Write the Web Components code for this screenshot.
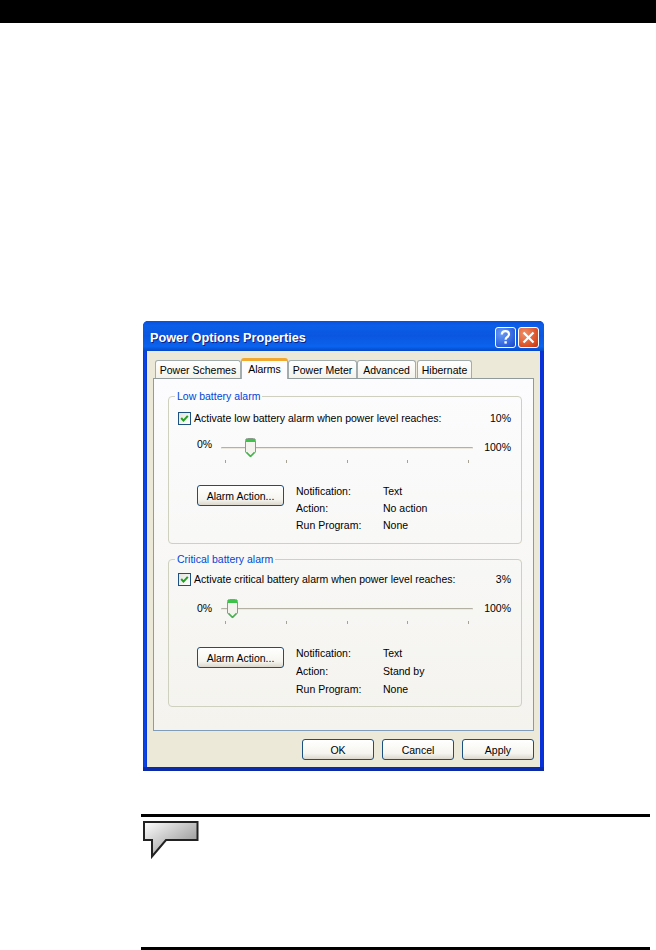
<!DOCTYPE html>
<html>
<head>
<meta charset="utf-8">
<title>Power Options Properties</title>
<style>
  html, body { margin: 0; padding: 0; background: #fff; }
  body { width: 656px; height: 950px; overflow: hidden; font-family: "Liberation Sans", Arial, sans-serif; }
</style>
</head>
<body>

<page-header></page-header>

<xp-dialog caption="Power Options Properties">
  <xp-tabs selected="Alarms" tabs="Power Schemes,Alarms,Power Meter,Advanced,Hibernate"></xp-tabs>
  <alarm-group style="height:148px;--check-top:14px;--action-gap:19px;--row:17px;--dl-top:-2px;--lo-top:-1px;--legend-bg:#fcfcfd"
    caption="Low battery alarm" label="Activate low battery alarm when power level reaches:"
    percent="10%" thumb="24" action="No action"></alarm-group>
  <alarm-group style="height:148px;margin-top:15px;--check-top:12px;--action-gap:20px;--row:18px;--dl-top:-3px;--lo-top:2px;--legend-bg:#f9f8f6"
    caption="Critical battery alarm" label="Activate critical battery alarm when power level reaches:"
    percent="3%" thumb="6" action="Stand by"></alarm-group>
</xp-dialog>

<note-box></note-box>

<script>
// black strip on top of the manual page
class PageHeader extends HTMLElement {
  constructor() {
    super();
    this.attachShadow({ mode: 'open' }).innerHTML = `
      <style>:host { display: block; height: 23px; background: #000; }</style>`;
  }
}

class XpButton extends HTMLElement {
  constructor() {
    super();
    this.attachShadow({ mode: 'open' }).innerHTML = `
      <style>
        :host {
          display: flex; align-items: center; justify-content: center;
          box-sizing: border-box; width: 72px; height: 21px;
          border: 1px solid #1a4f80; border-radius: 3px;
          background: linear-gradient(#fff, #f6f5ef 70%, #dcd8ce);
          font-size: 10.5px; color: #000;
        }
      </style>
      <slot></slot>`;
  }
}

class XpTabs extends HTMLElement {
  constructor() {
    super();
    this.attachShadow({ mode: 'open' });
  }
  connectedCallback() {
    let selected = this.getAttribute('selected');
    let widths = { 'Power Schemes': 86, 'Alarms': 47, 'Power Meter': 69, 'Advanced': 59, 'Hibernate': 55 };
    let html = '';
    this.getAttribute('tabs').split(',').forEach(function(name) {
      let cls = name === selected ? 'tab on' : 'tab';
      html += `<div class="${cls}" style="width:${widths[name]}px">${name}</div>`;
    });
    this.shadowRoot.innerHTML = `
      <style>
        :host { display: flex; align-items: flex-end; height: 20px; padding-left: 2px; margin-bottom: -1px; position: relative; z-index: 1; }
        .tab {
          box-sizing: border-box; height: 18px; margin-bottom: 1px;
          display: flex; align-items: center; justify-content: center;
          border: 1px solid #a3adae; border-bottom: 0; border-radius: 3px 3px 0 0;
          background: linear-gradient(#fff, #f3f2ea);
          font-size: 10.5px; color: #000; white-space: nowrap;
        }
        .tab:last-child { margin-left: 1px; }
        .tab.on {
          height: 21px; margin-bottom: 0; padding-bottom: 2px;
          background: #fcfcfe; border-top: 3px solid #f0a830; border-radius: 3px 3px 0 0;
        }
      </style>${html}`;
  }
}

class XpSlider extends HTMLElement {
  constructor() {
    super();
    this.attachShadow({ mode: 'open' });
  }
  connectedCallback() {
    let thumb = this.getAttribute('thumb');
    this.shadowRoot.innerHTML = `
      <style>
        :host { display: block; position: relative; width: 252px; height: 28px; }
        .track { margin-top: 9px; height: 1px; background: #b4b1a4; border-bottom: 1px solid #ebe9e0; border-radius: 1px; }
        .ticks { display: flex; justify-content: space-between; margin: 11px 4px 0 4px; }
        .ticks i { width: 1px; height: 3px; background: #a5a296; }
        svg { position: absolute; top: 0; left: ${thumb}px; }
      </style>
      <div class="track"></div>
      <div class="ticks"><i></i><i></i><i></i><i></i><i></i></div>
      <svg width="11" height="20" viewBox="0 0 11 20">
        <path d="M.5 2.5 Q.5 .5 2.5 .5 H8.5 Q10.5 .5 10.5 2.5 V14 L5.5 19 L.5 14 Z" fill="#f4f3ee" stroke="#8b9a8c"/>
        <path d="M1 1 H10 V4 H1 Z" fill="#3fc24a"/>
        <path d="M1.5 14.3 L5.5 18.3 L9.5 14.3" fill="none" stroke="#3fb54a" stroke-width="1.4"/>
      </svg>`;
  }
}

class AlarmGroup extends HTMLElement {
  constructor() {
    super();
    this.attachShadow({ mode: 'open' });
  }
  connectedCallback() {
    let a = (n) => this.getAttribute(n);
    this.shadowRoot.innerHTML = `
      <style>
        :host {
          display: block; position: relative; box-sizing: border-box; width: 354px;
          margin-left: 14px; border: 1px solid #d0d0bf; border-radius: 4px;
          padding: 0 9px 0 9px; font-size: 10.5px; color: #000;
        }
        .legend { position: absolute; top: -8px; left: 6px; padding: 0 2px; height: 14px; line-height: 14px; color: #0046d5; background: var(--legend-bg); }
        .check-row { display: flex; align-items: center; height: 14px; margin-top: var(--check-top); }
        .box { box-sizing: border-box; width: 13px; height: 13px; border: 1px solid #1c5180; background: linear-gradient(135deg, #e4e3dd, #fff); margin-right: 3px; flex: none; }
        .box svg { display: block; }
        .pct { margin-left: auto; margin-right: 1px; }
        .slider-row { display: flex; align-items: flex-start; margin-top: 13px; padding-left: 19px; }
        .slider-row .lo { width: 24px; line-height: 15px; margin-top: var(--lo-top); }
        .slider-row .hi { line-height: 15px; margin-left: auto; margin-right: 1px; margin-top: 2px; }
        .action-row { display: flex; align-items: flex-start; margin-top: var(--action-gap); padding-left: 19px; }
        xp-button { width: 87px; margin-right: 12px; }
        dl { margin: var(--dl-top) 0 0 0; display: grid; grid-template-columns: 87px auto; grid-auto-rows: var(--row); line-height: var(--row); }
        dt, dd { margin: 0; }
      </style>
      <div class="legend">${a('caption')}</div>
      <div class="check-row">
        <div class="box"><svg width="11" height="11" viewBox="0 0 11 11"><path d="M2.2 5 L4.5 7.6 L8.8 2.8" fill="none" stroke="#21a121" stroke-width="2"/></svg></div>
        <span>${a('label')}</span>
        <span class="pct">${a('percent')}</span>
      </div>
      <div class="slider-row">
        <span class="lo">0%</span>
        <xp-slider thumb="${a('thumb')}"></xp-slider>
        <span class="hi">100%</span>
      </div>
      <div class="action-row">
        <xp-button>Alarm Action...</xp-button>
        <dl>
          <dt>Notification:</dt><dd>Text</dd>
          <dt>Action:</dt><dd>${a('action')}</dd>
          <dt>Run Program:</dt><dd>None</dd>
        </dl>
      </div>`;
  }
}

class XpDialog extends HTMLElement {
  constructor() {
    super();
    this.attachShadow({ mode: 'open' });
  }
  connectedCallback() {
    this.shadowRoot.innerHTML = `
      <style>
        :host {
          display: block; box-sizing: border-box; width: 401px; height: 450px;
          margin: 298px 0 0 143px; background: #0831d9;
          background: linear-gradient(90deg, #0831d9, #0a4ae6 2px, #0831d9 4px);
          border-radius: 5px 5px 0 0; overflow: hidden;
          font-family: "Liberation Sans", Arial, sans-serif;
        }
        .title {
          height: 30px; display: flex; align-items: flex-start; padding: 4px 5px 0 7px; box-sizing: border-box;
          background: linear-gradient(#0a4fe0, #0a5ee8 15%, #0b56e0 50%, #0a63ee 85%, #0548c8);
          color: #fff; font-size: 12.7px; font-weight: bold; line-height: 18px;
          text-shadow: 1px 1px 0 #0f1f80;
        }
        .title span { flex: 1; padding-top: 4px; }
        .cap { box-sizing: border-box; width: 21px; height: 21px; border: 1px solid #fff; border-radius: 3px; margin: 2px 0 0 2px; }
        .cap svg { display: block; }
        .help { background: radial-gradient(circle at 30% 30%, #6a9cf5, #2a5fdc 70%, #1f47b8); }
        .close { background: radial-gradient(circle at 30% 30%, #f0906a, #d94d22 70%, #b5361a); }
        .body {
          box-sizing: border-box; height: 416px; margin: 0 4px; padding: 8px 0 0 6px; background: #ece9d8;
        }
        .panel {
          box-sizing: border-box; width: 381px; height: 353px; padding-top: 17px;
          border: 1px solid #919b9c; border-right-color: #7f9db9; border-bottom-color: #7f9db9;
          background: linear-gradient(#fcfcfe, #f4f3ee);
        }
        .buttons { display: flex; justify-content: flex-end; gap: 8px; margin-top: 8px; width: 381px; }
        .foot { height: 4px; background: #0a2aa8; }
      </style>
      <div class="title">
        <span>${this.getAttribute('caption')}</span>
        <div class="cap help"><svg width="19" height="19" viewBox="0 0 19 19"><path d="M5.8 6.5 Q6 3.2 9.5 3.2 Q13 3.2 13 6.2 Q13 8 11 9.2 Q9.6 10 9.6 11.8" fill="none" stroke="#fff" stroke-width="2.2"/><rect x="8.4" y="13.2" width="2.4" height="2.4" fill="#fff"/></svg></div>
        <div class="cap close"><svg width="19" height="19" viewBox="0 0 19 19"><path d="M4.5 4.5 L14.5 14.5 M14.5 4.5 L4.5 14.5" stroke="#fff" stroke-width="2.2"/></svg></div>
      </div>
      <div class="body">
        <slot name="tabs"></slot>
        <div class="panel"><slot></slot></div>
        <div class="buttons">
          <xp-button>OK</xp-button>
          <xp-button>Cancel</xp-button>
          <xp-button>Apply</xp-button>
        </div>
      </div>
      <div class="foot"></div>`;
    // tabs go above the panel, the groups inside it
    let tabs = this.querySelector('xp-tabs');
    if (tabs) { tabs.setAttribute('slot', 'tabs'); }
  }
}

class NoteBox extends HTMLElement {
  constructor() {
    super();
    this.attachShadow({ mode: 'open' }).innerHTML = `
      <style>
        :host {
          display: block; box-sizing: border-box; width: 509px; height: 136px;
          margin: 43px 0 0 141px; border-top: 3px solid #000; border-bottom: 3px solid #000;
          padding: 4px 0 0 2px;
        }
        svg { display: block; }
      </style>
      <svg width="56" height="38" viewBox="0 0 56 38">
        <defs>
          <linearGradient id="bubble" x1="0" y1="0" x2="1" y2="1">
            <stop offset="0" stop-color="#fff"/>
            <stop offset="1" stop-color="#808080"/>
          </linearGradient>
        </defs>
        <path d="M1 1 H54.5 V19 H23 L9 35.5 V19 H1 Z" fill="url(#bubble)" stroke="#222" stroke-width="2"/>
      </svg>`;
  }
}

window.customElements.define('page-header', PageHeader);
window.customElements.define('xp-button', XpButton);
window.customElements.define('xp-tabs', XpTabs);
window.customElements.define('xp-slider', XpSlider);
window.customElements.define('alarm-group', AlarmGroup);
window.customElements.define('xp-dialog', XpDialog);
window.customElements.define('note-box', NoteBox);
</script>
</body>
</html>
